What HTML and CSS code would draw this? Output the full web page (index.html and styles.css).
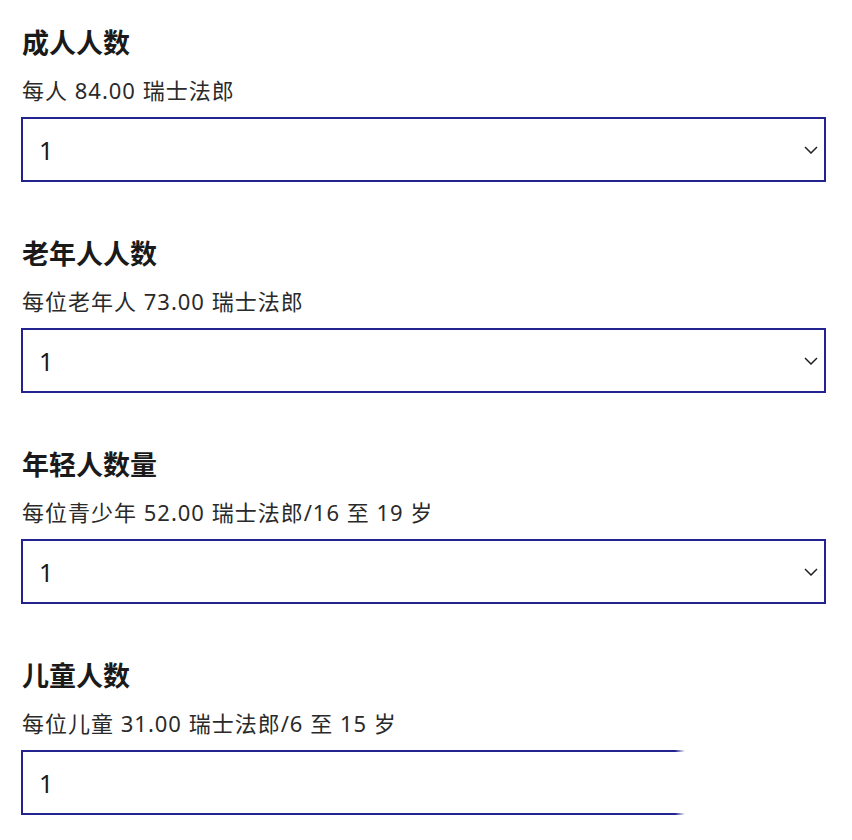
FILE: index.html
```html
<!DOCTYPE html>
<html lang="zh-CN">
<head>
    <meta charset="UTF-8">
    <meta name="viewport" content="width=device-width, initial-scale=1.0">
    <title>门票数量</title>
    <link rel="stylesheet" href="styles.css">
</head>
<body>

<div class="container">
    <div class="field">
        <h2>成人人数</h2>
        <p>每人 84.00 瑞士法郎</p>
        <div class="select">
            <span>1</span>
            <svg class="chevron" width="14" height="8" viewBox="0 0 14 8"><path d="M1 1l6 6 6-6" fill="none" stroke="#222" stroke-width="1.5"/></svg>
        </div>
    </div>

    <div class="field">
        <h2>老年人人数</h2>
        <p>每位老年人 73.00 瑞士法郎</p>
        <div class="select">
            <span>1</span>
            <svg class="chevron" width="14" height="8" viewBox="0 0 14 8"><path d="M1 1l6 6 6-6" fill="none" stroke="#222" stroke-width="1.5"/></svg>
        </div>
    </div>

    <div class="field">
        <h2>年轻人数量</h2>
        <p>每位青少年 52.00 瑞士法郎/16 至 19 岁</p>
        <div class="select">
            <span>1</span>
            <svg class="chevron" width="14" height="8" viewBox="0 0 14 8"><path d="M1 1l6 6 6-6" fill="none" stroke="#222" stroke-width="1.5"/></svg>
        </div>
    </div>

    <div class="field">
        <h2>儿童人数</h2>
        <p>每位儿童 31.00 瑞士法郎/6 至 15 岁</p>
        <div class="select">
            <span>1</span>
            <svg class="chevron" width="14" height="8" viewBox="0 0 14 8"><path d="M1 1l6 6 6-6" fill="none" stroke="#222" stroke-width="1.5"/></svg>
            <div class="fade"></div>
        </div>
    </div>
</div>

</body>
</html>
```

FILE: styles.css
```css
body {
    font-family: "Noto Sans", "Noto Sans CJK SC", sans-serif;
    margin: 0;
    padding: 0;
    background-color: #fff;
    color: #1a1a1a;
    overflow: hidden;
}
.container {
    padding: 27px 26px 0 21px;
}
.field {
    margin-bottom: 56px;
}
.field h2 {
    margin: 0 0 17px 1px;
    font-size: 27px;
    line-height: 32px;
    font-weight: 700;
}
.field p {
    margin: 0 0 13px 1px;
    font-size: 22px;
    line-height: 28px;
    letter-spacing: 1px;
    color: #2a2a2a;
}
.select {
    position: relative;
    display: flex;
    align-items: center;
    justify-content: space-between;
    height: 65px;
    box-sizing: border-box;
    border: 2px solid #23238f;
    padding: 0 6px 0 16px;
    font-size: 25px;
}
.fade {
    position: absolute;
    top: -6px;
    bottom: -6px;
    left: 652px;
    right: -30px;
    background: linear-gradient(to right, rgba(255,255,255,0), #fff 10px);
}
```
